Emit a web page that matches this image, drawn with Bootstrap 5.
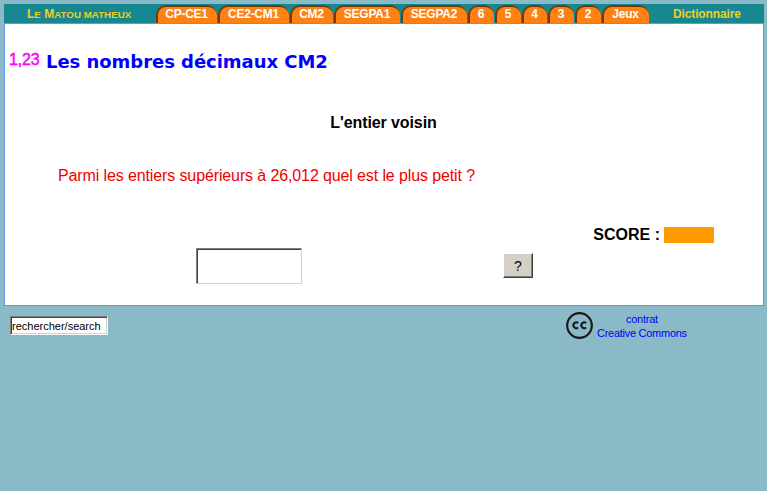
<!DOCTYPE html>
<html lang="fr">
<head>
<meta charset="utf-8">
<title>Le Matou matheux</title>
<link rel="stylesheet" href="https://cdn.jsdelivr.net/npm/bootstrap@5.3.0/dist/css/bootstrap.min.css">
<style>
body{background:#8abac8;font:16px/18px "Liberation Sans",Arial,sans-serif;color:#000;padding:4px 3px 0 4px}
a{text-decoration:none}
.topbar{height:19px;background:#178890;font-size:12px;line-height:19px;font-weight:bold}
.topbar a{color:#f2cd20;white-space:nowrap}
.brand{width:152px;padding-left:23px;padding-top:1px}
.caps{font-size:9.7px;text-transform:uppercase;letter-spacing:.05px}
.tabs{display:grid;grid-template-columns:62px 72px 44px 67px 67px 27px 27px 26px 27px 27px 48px;padding-top:1px}
.tabs a{color:#fff;background:#fd8213;border:solid #713a0c;border-width:2px 0 0 2px;border-radius:10px 10px 0 0;margin-right:1px;height:18px;line-height:15px;padding-right:2px;text-align:center;letter-spacing:-.25px}
.dico{padding-left:23px;line-height:20px;letter-spacing:-.13px}
.sheet{width:760px;height:283px;background:#fff;border:1px solid #6495ed}
.num{color:#f0f;width:41px;padding:27px 0 0 4px;letter-spacing:-.2px;-webkit-text-stroke:.5px #f0f}
.heading{font:bold 18px/24px "DejaVu Sans",Verdana,sans-serif;color:#00f;padding-top:26px;margin:0;letter-spacing:-.04px}
.exo{font-size:16px;line-height:18px;font-weight:bold;margin:40px 0 0;padding-right:1px;letter-spacing:-.1px}
.question{color:#f00000;margin:35px 0 0 53px;letter-spacing:-.118px}
.score{margin:41px 49px 0 0;font-weight:bold}
.gauge{width:50px;height:16px;background:#f90;margin:1px 0 0 4px}
.answer{width:106px;height:36px;margin-left:191px;background:#fff;border:1px solid;border-color:#808080 #d4d0c8 #d4d0c8 #808080;box-shadow:inset 1px 1px #404040;border-radius:0;outline:0}
.help{width:30px;height:25px;margin:5px 0 0 201px;padding:0;background:#d4d0c8;border:1px solid;border-color:#fff #404040 #404040 #fff;box-shadow:inset -1px -1px #808080;font-size:14px}
.search{width:98px;height:19px;margin:10px 0 0 6px;padding:0 1px;border:1px solid;border-color:#808080 #fff #fff #808080;box-shadow:inset 1px 1px #404040,inset -1px -1px #d4d0c8;font-size:11px;outline:0}
.license{margin:6px 0 0 458px;font-size:11px;line-height:14px}
.license a{color:#00f;text-align:center;margin-left:4px;white-space:nowrap;letter-spacing:-.27px}
</style>
<script src="https://cdn.jsdelivr.net/npm/bootstrap@5.3.0/dist/js/bootstrap.bundle.min.js"></script>
</head>
<body>
<nav class="topbar d-flex">
<a class="brand" href="#">L<span class="caps">e</span> M<span class="caps">atou matheux</span></a>
<div class="tabs"><a href="#">CP-CE1</a><a href="#">CE2-CM1</a><a href="#">CM2</a><a href="#">SEGPA1</a><a href="#">SEGPA2</a><a href="#">6</a><a href="#">5</a><a href="#">4</a><a href="#">3</a><a href="#">2</a><a href="#">Jeux</a></div>
<a class="dico" href="#">Dictionnaire</a>
</nav>
<main class="sheet">
<div class="d-flex"><span class="num">1,23</span><h1 class="heading">Les nombres décimaux CM2</h1></div>
<h2 class="exo text-center">L'entier voisin</h2>
<p class="question">Parmi les entiers supérieurs à 26,012 quel est le plus petit ?</p>
<div class="score d-flex justify-content-end">SCORE :<span class="gauge"></span></div>
<div class="d-flex mt-1"><input class="answer" aria-label="Réponse"><button class="help" type="button">?</button></div>
</main>
<footer class="d-flex align-items-start">
<input class="search" value="rechercher/search" aria-label="Recherche">
<div class="license d-flex">
<svg width="27" height="27" viewBox="0 0 27 27" fill="none" stroke="#1a1a1a"><circle cx="13.5" cy="13.5" r="12.3" stroke-width="2.2"/><path d="M12.2 11.1A2.9 2.9 0 1 0 12.2 15.5M20.2 11.1A2.9 2.9 0 1 0 20.2 15.5" stroke-width="2.1"/></svg>
<a href="#">contrat<br>Creative Commons</a>
</div>
</footer>
</body>
</html>
